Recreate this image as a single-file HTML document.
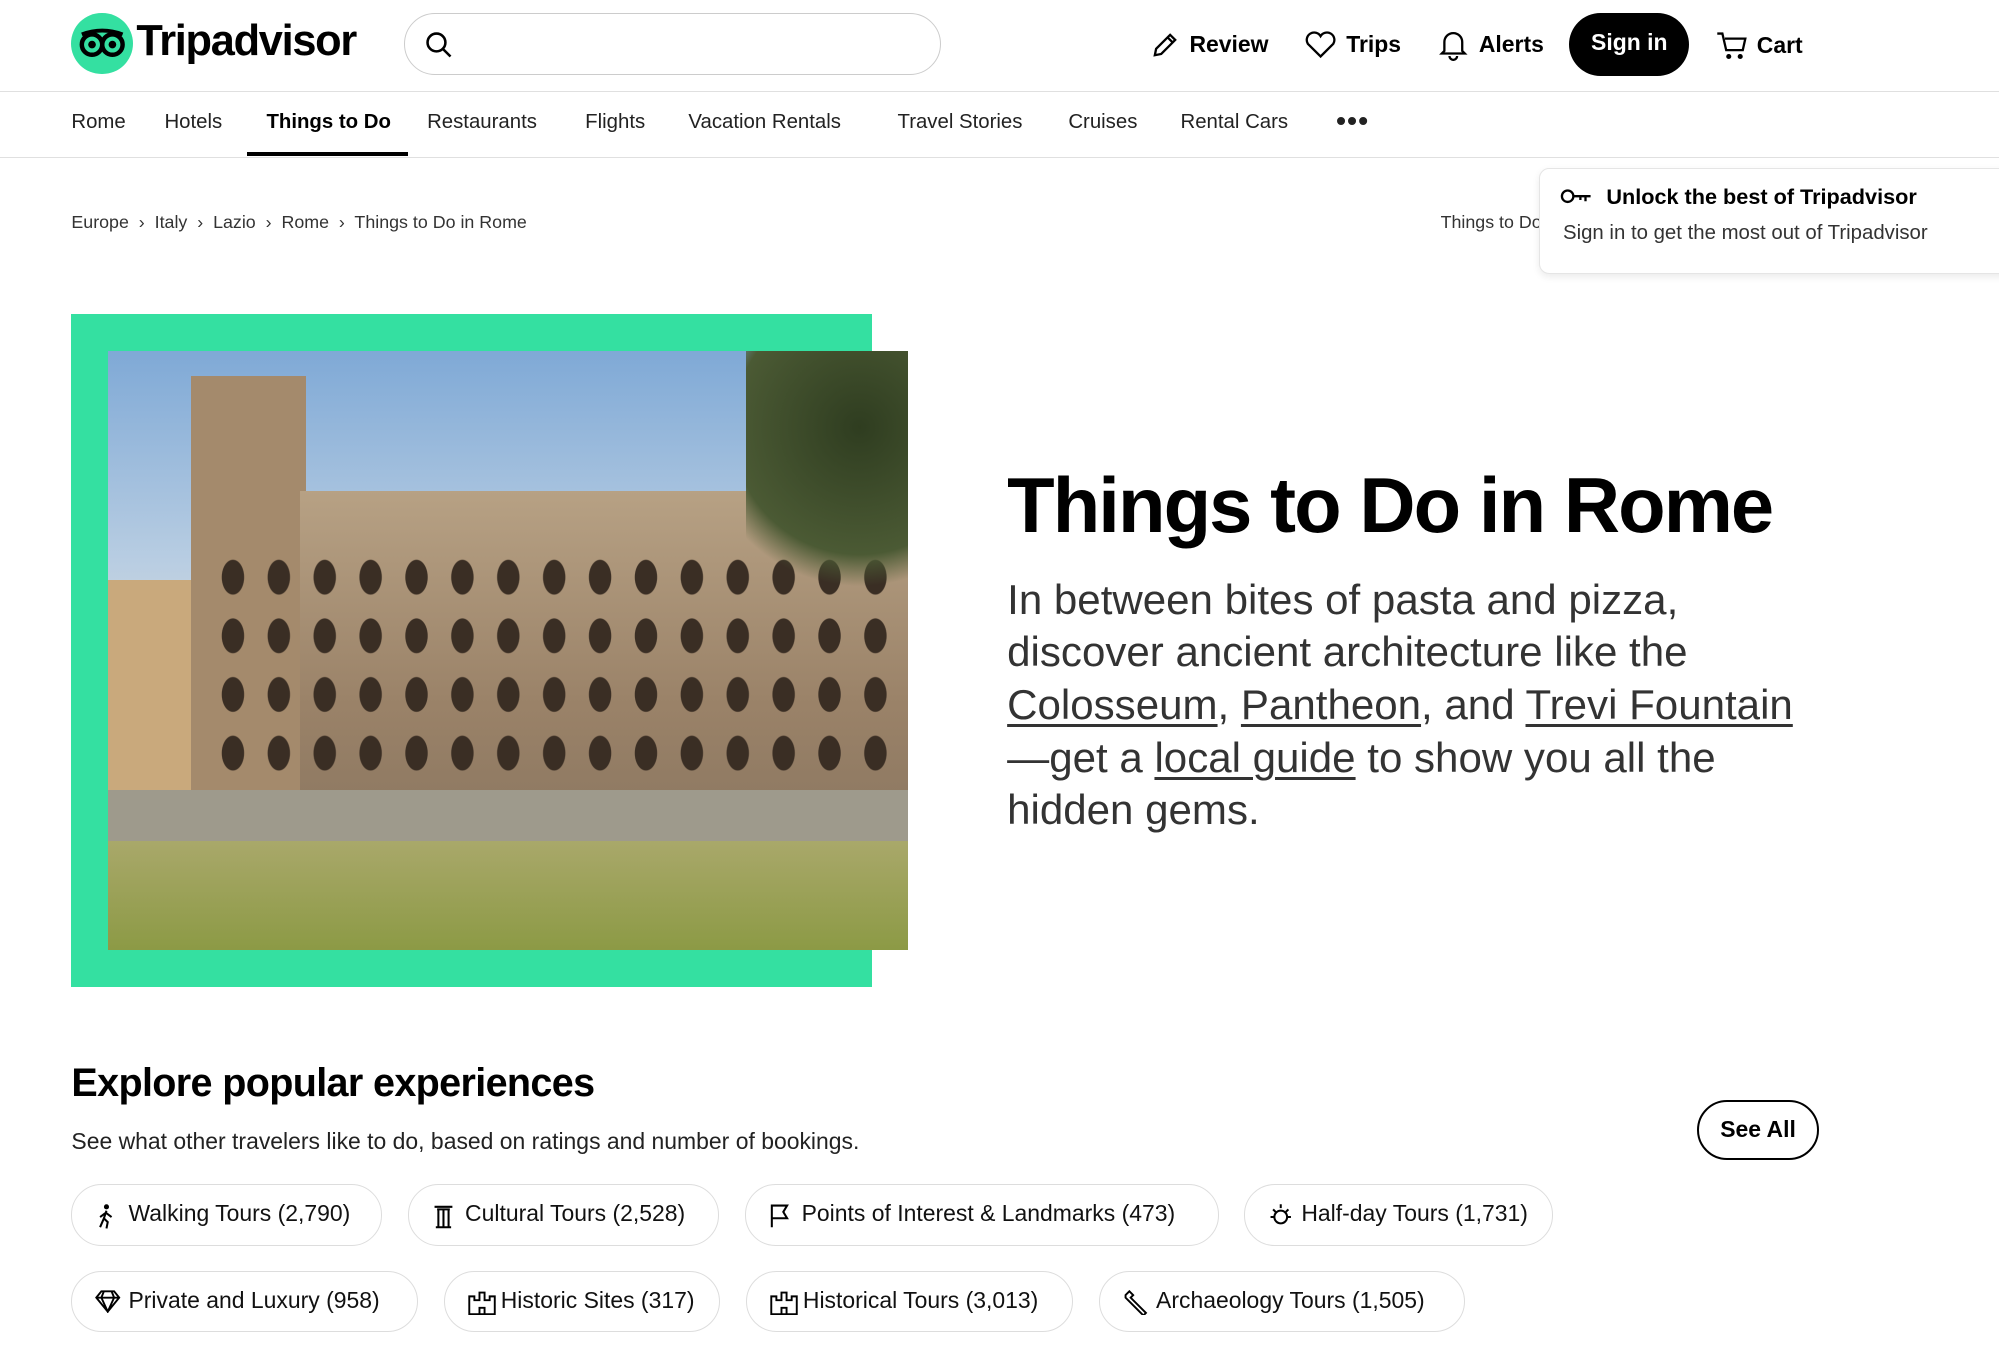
<!DOCTYPE html>
<html><head><meta charset="utf-8"><style>
html,body{margin:0;padding:0;background:#fff;overflow:hidden}
body{width:1999px;height:1347px}
#w{zoom:1.27487;width:1568px;height:1057px;position:relative;font-family:"Liberation Sans",sans-serif;color:#000}
.a{position:absolute;white-space:nowrap}
.nav span{position:absolute;top:87px;font-size:16px;color:#222}
.pill{position:absolute;border:1.5px solid #ddd;border-radius:24px;font-size:18px;line-height:45px;box-sizing:border-box;height:48px;padding-left:44px;color:#111}
.pill svg{position:absolute;left:18px;top:14px}
u{text-decoration-thickness:2px;text-underline-offset:4px}
.arch{position:absolute;background:radial-gradient(ellipse 9px 14px at 50% 60%,#3a2e24 95%,transparent 100%);background-size:36px 46px}
</style></head><body><div id="w">
<!-- header -->
<div class="a" style="left:56px;top:10px;width:48px;height:48px;border-radius:50%;background:#34e0a1"></div>
<svg class="a" style="left:61px;top:22px" width="38" height="24" viewBox="0 0 38 24"><path d="M3 5 Q19 -1 35 5" stroke="#000" stroke-width="3" fill="none"/><circle cx="11" cy="13" r="8" fill="none" stroke="#000" stroke-width="3.5"/><circle cx="27" cy="13" r="8" fill="none" stroke="#000" stroke-width="3.5"/><circle cx="11" cy="13" r="3" fill="#000"/><circle cx="27" cy="13" r="3" fill="#000"/></svg>
<div class="a" style="left:107px;top:13px;font-size:34px;font-weight:bold;letter-spacing:-1px">Tripadvisor</div>
<div class="a" style="left:317px;top:10px;width:421px;height:49px;border:1.5px solid #ccc;border-radius:26px;box-sizing:border-box"></div>
<svg class="a" style="left:333px;top:24px" width="22" height="22" viewBox="0 0 22 22"><circle cx="9" cy="9" r="7" fill="none" stroke="#000" stroke-width="2"/><path d="M14 14l6 6" stroke="#000" stroke-width="2"/></svg>
<svg class="a" style="left:903px;top:24px" width="22" height="22" viewBox="0 0 22 22"><path d="M3 19l1-5L15 3l4 4L8 18z M13 5l4 4" fill="none" stroke="#000" stroke-width="1.8"/></svg>
<div class="a" style="left:933px;top:24px;font-size:18px;font-weight:bold">Review</div>
<svg class="a" style="left:1023px;top:24px" width="26" height="22" viewBox="0 0 26 22"><path d="M13 20L3 10a5.5 5.5 0 0 1 10-6 5.5 5.5 0 0 1 10 6z" fill="none" stroke="#000" stroke-width="1.8"/></svg>
<div class="a" style="left:1056px;top:24px;font-size:18px;font-weight:bold">Trips</div>
<svg class="a" style="left:1128px;top:22px" width="24" height="26" viewBox="0 0 24 26"><path d="M5 18V11a7 7 0 0 1 14 0v7l2 2H3z M9 22a3 3 0 0 0 6 0" fill="none" stroke="#000" stroke-width="1.8"/></svg>
<div class="a" style="left:1160px;top:24px;font-size:18px;font-weight:bold">Alerts</div>
<div class="a" style="left:1231px;top:10px;width:94px;height:50px;border-radius:25px;background:#000;color:#fff;font-size:18px;font-weight:bold;text-align:center;line-height:46px">Sign in</div>
<svg class="a" style="left:1346px;top:24px" width="26" height="24" viewBox="0 0 26 24"><path d="M1 2h4l3 13h13l2-9H7" fill="none" stroke="#000" stroke-width="1.8"/><circle cx="10" cy="20" r="2" fill="#000"/><circle cx="19" cy="20" r="2" fill="#000"/></svg>
<div class="a" style="left:1378px;top:25px;font-size:18px;font-weight:bold">Cart</div>
<div class="a" style="left:0;top:71px;width:1568px;height:1px;background:#e0e0e0"></div>
<div class="nav">
<span style="left:56px">Rome</span><span style="left:129px">Hotels</span><span style="left:209px;color:#000;font-weight:bold">Things to Do</span><span style="left:335px">Restaurants</span><span style="left:459px">Flights</span><span style="left:540px">Vacation Rentals</span><span style="left:704px">Travel Stories</span><span style="left:838px">Cruises</span><span style="left:926px">Rental Cars</span><span style="left:1048px;font-size:22px;top:82px;font-weight:bold;letter-spacing:1px">•••</span>
</div>
<div class="a" style="left:194px;top:119px;width:126px;height:3px;background:#000"></div>
<div class="a" style="left:0;top:123px;width:1568px;height:1px;background:#e0e0e0"></div>
<!-- breadcrumb -->
<div class="a" style="left:56px;top:166px;font-size:14px;color:#333">Europe &nbsp;›&nbsp; Italy &nbsp;›&nbsp; Lazio &nbsp;›&nbsp; Rome &nbsp;›&nbsp; Things to Do in Rome</div>
<div class="a" style="left:1130px;top:166px;font-size:14px;color:#333">Things to Do</div>
<div class="a" style="left:1207px;top:132px;width:380px;height:81px;background:#fff;border:1px solid #e5e5e5;border-radius:8px;box-shadow:0 2px 6px rgba(0,0,0,.08)"></div>
<svg class="a" style="left:1224px;top:146px" width="26" height="16" viewBox="0 0 26 16"><circle cx="6" cy="8" r="4.5" fill="none" stroke="#000" stroke-width="1.8"/><path d="M10.5 8H24M20 8v4M16 8v3" fill="none" stroke="#000" stroke-width="1.8"/></svg>
<div class="a" style="left:1260px;top:144px;font-size:17px;font-weight:bold">Unlock the best of Tripadvisor</div>
<div class="a" style="left:1226px;top:174px;font-size:16px;color:#333">Sign in to get the most out of Tripadvisor</div>
<!-- hero -->
<div class="a" style="left:56px;top:246px;width:628px;height:528px;background:#34e0a1"></div>
<div class="a" style="left:85px;top:275px;width:627px;height:470px;overflow:hidden;background:linear-gradient(180deg,#7fa9d6 0%,#b8cde2 35%,#c9d5de 45%)">
 <div class="a" style="left:0;top:180px;width:80px;height:200px;background:#c9a97c"></div>
 <div class="a" style="left:65px;top:20px;width:90px;height:370px;background:#a48a6c"></div>
 <div class="a" style="left:150px;top:110px;width:477px;height:280px;background:linear-gradient(180deg,#b7a184,#9a8268 60%,#8a7660)"></div>
 <div class="arch" style="left:80px;top:150px;width:540px;height:220px"></div>
 <div class="a" style="left:500px;top:0;width:127px;height:200px;background:radial-gradient(circle at 70% 30%,#2f3d20,#4b5a34 60%,transparent 75%)"></div>
 <div class="a" style="left:0;top:345px;width:627px;height:40px;background:#9e9a8c"></div>
 <div class="a" style="left:0;top:385px;width:627px;height:85px;background:linear-gradient(180deg,#a9a86a,#8c9a45)"></div>
</div>
<div class="a" style="left:790px;top:362px;font-size:61px;font-weight:bold;letter-spacing:-1.5px">Things to Do in Rome</div>
<div class="a" style="left:790px;top:450px;font-size:33px;line-height:41.3px;color:#333">In between bites of pasta and pizza,<br>discover ancient architecture like the<br><u>Colosseum</u>, <u>Pantheon</u>, and <u>Trevi Fountain</u><br>—get a <u>local guide</u> to show you all the<br>hidden gems.</div>
<!-- explore -->
<div class="a" style="left:56px;top:832px;font-size:31px;font-weight:bold;letter-spacing:-.5px">Explore popular experiences</div>
<div class="a" style="left:56px;top:885px;font-size:18px;color:#222">See what other travelers like to do, based on ratings and number of bookings.</div>
<div class="a" style="left:1331px;top:863px;width:96px;height:47px;border:2px solid #000;border-radius:24px;box-sizing:border-box;font-size:18px;font-weight:bold;text-align:center;line-height:43px">See All</div>
<div class="pill" style="left:56px;top:929px;width:244px"><svg width="18" height="20" viewBox="0 0 18 20"><circle cx="9" cy="3" r="2" fill="#000"/><path d="M9 6l-2 6 3 3-1 5M7 12l-3 7M8 8l-4 3M9 8l4 3" stroke="#000" stroke-width="1.6" fill="none"/></svg>Walking Tours (2,790)</div>
<div class="pill" style="left:320px;top:929px;width:244px"><svg width="18" height="20" viewBox="0 0 18 20"><path d="M2 3h14M4 5h10M5 5v14M9 5v14M13 5v14M3 19h12" stroke="#000" stroke-width="1.6" fill="none"/></svg>Cultural Tours (2,528)</div>
<div class="pill" style="left:584px;top:929px;width:372px"><svg width="18" height="20" viewBox="0 0 18 20"><path d="M3 19V2h12l-3 5 3 5H3" stroke="#000" stroke-width="1.6" fill="none"/></svg>Points of Interest &amp; Landmarks (473)</div>
<div class="pill" style="left:976px;top:929px;width:242px"><svg width="20" height="20" viewBox="0 0 20 20"><circle cx="10" cy="11" r="5" stroke="#000" stroke-width="1.6" fill="none"/><path d="M10 1v3M2 11h3M15 11h3M4 5l2 2M16 5l-2 2" stroke="#000" stroke-width="1.6"/></svg>Half-day Tours (1,731)</div>
<div class="pill" style="left:56px;top:997px;width:272px"><svg width="20" height="18" viewBox="0 0 20 18"><path d="M1 6l4-5h10l4 5-9 11zM1 6h18M7 1l-2 5 5 11 5-11-2-5" stroke="#000" stroke-width="1.5" fill="none"/></svg>Private and Luxury (958)</div>
<div class="pill" style="left:348px;top:997px;width:217px"><svg width="22" height="20" viewBox="0 0 22 20"><path d="M1 19V5h4v3h4V2h4v6h4V5h4v14zM9 19v-5h4v5" stroke="#000" stroke-width="1.5" fill="none"/></svg>Historic Sites (317)</div>
<div class="pill" style="left:585px;top:997px;width:257px"><svg width="22" height="20" viewBox="0 0 22 20"><path d="M1 19V5h4v3h4V2h4v6h4V5h4v14zM9 19v-5h4v5" stroke="#000" stroke-width="1.5" fill="none"/></svg>Historical Tours (3,013)</div>
<div class="pill" style="left:862px;top:997px;width:287px"><svg width="20" height="20" viewBox="0 0 20 20"><path d="M2 4l3-3 3 3-2 2 12 12-2 2L4 8 2 6z" stroke="#000" stroke-width="1.5" fill="none"/></svg>Archaeology Tours (1,505)</div>
</div></body></html>
